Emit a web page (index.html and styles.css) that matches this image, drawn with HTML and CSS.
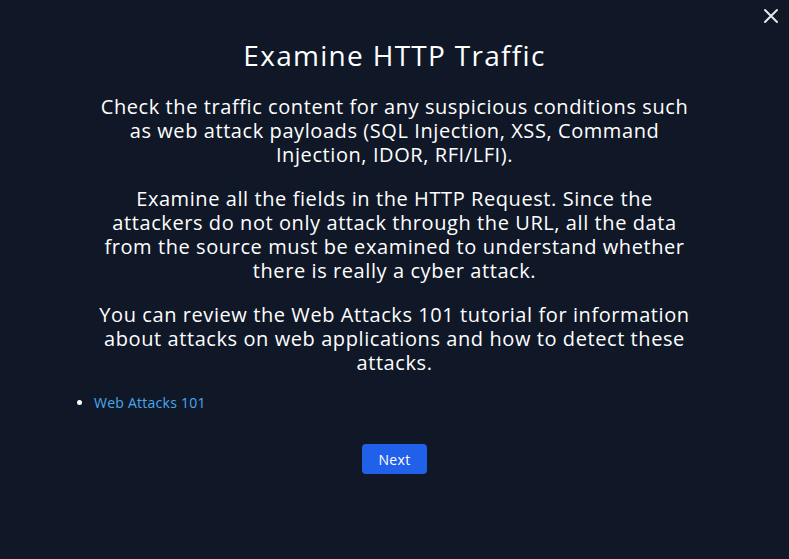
FILE: index.html
```html
<!DOCTYPE html>
<html lang="en">
<head>
<meta charset="utf-8">
<title>Examine HTTP Traffic</title>
<link rel="stylesheet" href="styles.css">
</head>
<body>
<div class="modal">
  <button class="close" aria-label="Close">
    <svg width="16" height="16" viewBox="0 0 16 16"><path d="M2 2 L14 14 M14 2 L2 14" stroke="#e5e7eb" stroke-width="2" stroke-linecap="round"/></svg>
  </button>
  <h1 class="title">Examine HTTP Traffic</h1>
  <div class="body">
    <p>Check the traffic content for any suspicious conditions such as web attack payloads (SQL Injection, XSS, Command Injection, IDOR, RFI/LFI).</p>
    <p>Examine all the fields in the HTTP Request. Since the attackers do not only attack through the URL, all the data from the source must be examined to understand whether there is really a cyber attack.</p>
    <p>You can review the Web Attacks 101 tutorial for information about attacks on web applications and how to detect these attacks.</p>
  </div>
  <ul class="links">
    <li><a href="#">Web Attacks 101</a></li>
  </ul>
  <div class="actions">
    <button class="next">Next</button>
  </div>
</div>
</body>
</html>
```
FILE: styles.css
```css
html, body {
  margin: 0;
  padding: 0;
  background: #101828;
  height: 100%;
}
body {
  font-family: "Open Sans", "DejaVu Sans", sans-serif;
  color: #ffffff;
}
.modal {
  position: relative;
  height: 559px;
  box-sizing: border-box;
  padding: 35px 54px 0 54px;
}
.close {
  position: absolute;
  top: 8px;
  right: 10px;
  background: none;
  border: none;
  padding: 0;
  width: 16px;
  height: 16px;
  cursor: pointer;
}
.close svg { display: block; }
.title {
  margin: 0 0 20px 0;
  font-size: 28px;
  font-weight: 500;
  line-height: 40px;
  letter-spacing: 1.3px;
  text-align: center;
}
.body {
  width: 610px;
  margin: 0 auto;
  text-align: center;
  font-size: 20px;
  line-height: 24px;
  letter-spacing: 0.58px;
}
.body p {
  margin: 0 0 20px 0;
}
.body p:last-child {
  margin-bottom: 0;
}
.links {
  margin: 18px 0 0 0;
  padding-left: 40px;
  font-size: 14px;
  line-height: 20px;
  letter-spacing: 0.25px;
}
.links a {
  color: #4aa8ee;
  text-decoration: none;
}
.actions {
  display: flex;
  justify-content: center;
  margin-top: 31px;
}
.next {
  width: 65px;
  height: 30px;
  border: none;
  border-radius: 4px;
  background: #2160e8;
  color: #ffffff;
  font-family: inherit;
  font-size: 14px;
  font-weight: 500;
  letter-spacing: 0.3px;
}
```
